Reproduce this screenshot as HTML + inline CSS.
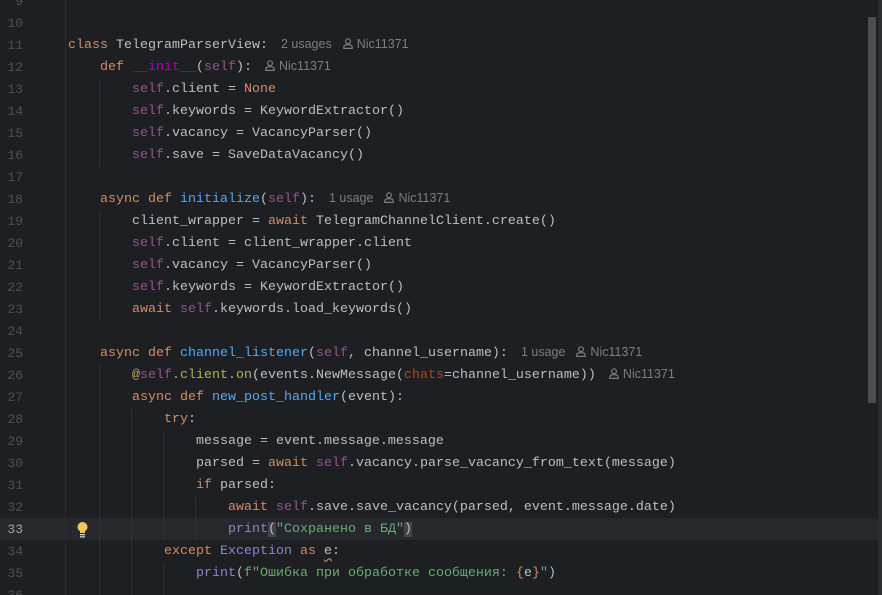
<!DOCTYPE html>
<html><head><meta charset="utf-8"><style>
html,body{margin:0;padding:0;background:#1e1f22;width:882px;height:595px;overflow:hidden;position:relative}
.ln{position:absolute;left:0;width:23px;text-align:right;font:13px "Liberation Mono",monospace;color:#4b5059;height:22px;line-height:22px}
.c{position:absolute;left:68px;font:13.33px "Liberation Mono","DejaVu Sans Mono",monospace;color:#bcbec4;white-space:pre;height:22px;line-height:22px}
.k{color:#cf8e6d}.s{color:#94558d}.f{color:#56a8f5}.m{color:#b200b2}.st{color:#6aab73}.b{color:#8888c6}.d{color:#b3ae60}.p{color:#aa4926}
.h{font:12.5px "Liberation Sans",sans-serif;color:#7a7e85;margin-left:13px;letter-spacing:0}
.h i{font-style:normal;margin-left:11px}
.u{display:inline-block;vertical-align:-1px;margin-right:4px}
.g{position:absolute;width:1px;background:#2f3136}
</style></head><body>
<div style="position:absolute;left:0;top:518px;width:878px;height:22px;background:#26282e"></div>
<div style="position:absolute;left:65px;top:0;width:1px;height:595px;background:#2b2d30"></div>
<div style="position:absolute;left:878px;top:0;width:4px;height:595px;background:#2b2d30"></div>
<div style="position:absolute;left:868px;top:17px;width:8px;height:386px;background:#4d4e51;border-radius:1px"></div>
<div class="g" style="left:99px;top:79px;height:88px"></div>
<div class="g" style="left:99px;top:211px;height:110px"></div>
<div class="g" style="left:99px;top:365px;height:230px"></div>
<div class="g" style="left:131px;top:409px;height:186px"></div>
<div class="g" style="left:163px;top:431px;height:110px"></div>
<div class="g" style="left:163px;top:563px;height:32px"></div>
<div class="g" style="left:195px;top:497px;height:44px"></div>
<svg style="position:absolute;left:76px;top:521px" width="13" height="18" viewBox="0 0 13 18"><circle cx="6.5" cy="6" r="5" fill="#f2c55c"/><rect x="4" y="9" width="5" height="3" fill="#f2c55c"/><rect x="4" y="13" width="5" height="1.3" fill="#ced0d6"/><rect x="4" y="15.2" width="5" height="1.3" fill="#ced0d6"/></svg>
<div id="x"></div>
<script>
var ic='<svg class="u" width="10" height="11" viewBox="0 0 10 11"><circle cx="5" cy="3.2" r="2.4" fill="none" stroke="#7a7e85" stroke-width="1.2"/><path d="M0.8 10.4v-1.2c0-1.6 1.4-2.6 4.2-2.6s4.2 1 4.2 2.6v1.2z" fill="none" stroke="#7a7e85" stroke-width="1.2"/></svg>';
function H(u){return '<span class="h">'+(u?u:'')+(u?'<i>':'<i style="margin-left:0">')+ic+'Nic11371</i></span>';}
var L={
11:'<span class="k">class</span> TelegramParserView:'+H('2 usages'),
12:'    <span class="k">def</span> <span class="m">__init__</span>(<span class="s">self</span>):'+H(''),
13:'        <span class="s">self</span>.client = <span class="k">None</span>',
14:'        <span class="s">self</span>.keywords = KeywordExtractor()',
15:'        <span class="s">self</span>.vacancy = VacancyParser()',
16:'        <span class="s">self</span>.save = SaveDataVacancy()',
18:'    <span class="k">async def</span> <span class="f">initialize</span>(<span class="s">self</span>):'+H('1 usage'),
19:'        client_wrapper = <span class="k">await</span> TelegramChannelClient.create()',
20:'        <span class="s">self</span>.client = client_wrapper.client',
21:'        <span class="s">self</span>.vacancy = VacancyParser()',
22:'        <span class="s">self</span>.keywords = KeywordExtractor()',
23:'        <span class="k">await</span> <span class="s">self</span>.keywords.load_keywords()',
25:'    <span class="k">async def</span> <span class="f">channel_listener</span>(<span class="s">self</span>, channel_username):'+H('1 usage'),
26:'        <span class="d">@</span><span class="s">self</span><span class="d">.client.on</span>(events.NewMessage(<span class="p">chats</span>=channel_username))'+H(''),
27:'        <span class="k">async def</span> <span class="f">new_post_handler</span>(event):',
28:'            <span class="k">try</span>:',
29:'                message = event.message.message',
30:'                parsed = <span class="k">await</span> <span class="s">self</span>.vacancy.parse_vacancy_from_text(message)',
31:'                <span class="k">if</span> parsed:',
32:'                    <span class="k">await</span> <span class="s">self</span>.save.save_vacancy(parsed, event.message.date)',
33:'                    <span class="b">print</span><span style="background:#43454a">(</span><span class="st">"Сохранено в БД"</span><span style="background:#43454a">)</span>',
34:'            <span class="k">except</span> <span class="b">Exception</span> <span class="k">as</span> <span style="text-decoration:underline wavy #a08a5a;text-underline-offset:3px">e</span>:',
35:'                <span class="b">print</span>(<span class="st">f"Ошибка при обработке сообщения: </span><span class="k">{</span>e<span class="k">}</span><span class="st">"</span>)'
};
var o='';
for(var n=9;n<=36;n++){var t=35+(n-11)*22;
o+='<div class="ln" style="top:'+t+'px'+(n==33?';color:#a1a3ab':'')+'">'+n+'</div>';
if(L[n])o+='<div class="c" style="top:'+t+'px">'+L[n]+'</div>';}
document.getElementById('x').innerHTML=o;
</script>
</body></html>
